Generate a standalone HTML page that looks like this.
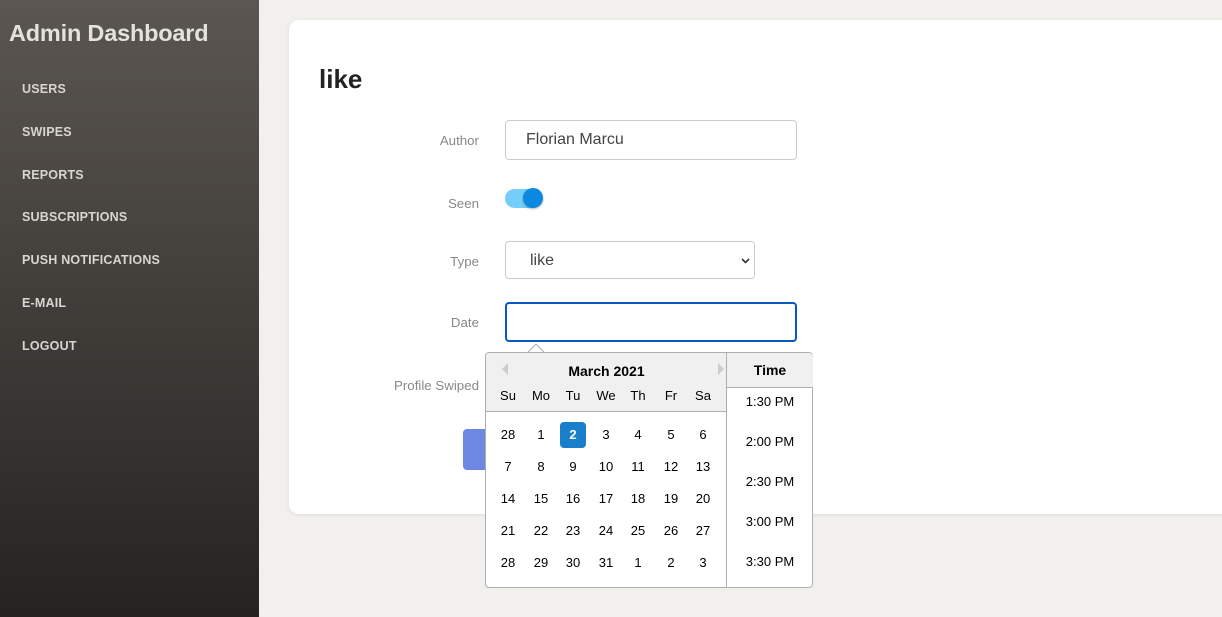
<!DOCTYPE html><html><head><style>
*{box-sizing:border-box;margin:0;padding:0}
body{width:1222px;height:617px;overflow:hidden;font-family:"Liberation Sans",sans-serif;background:#f1f0ed;position:relative}
.sb{position:absolute;left:0;top:0;width:259px;height:617px;background:linear-gradient(#5b5651,#252321)}
.sb h1{position:absolute;left:9px;top:20px;font-size:23.5px;color:#e4e2df;font-weight:bold;letter-spacing:-0.2px}
.sb a{position:absolute;left:22px;font-size:12.5px;color:#d8d5d2;letter-spacing:0.2px;font-weight:bold}
.card{position:absolute;left:289px;top:20px;width:960px;height:494px;background:#fff;border-radius:10px;box-shadow:0 1px 4px rgba(0,0,0,.08)}
.t{position:absolute;left:319px;top:64px;font-size:26px;font-weight:bold;color:#222}
.l{position:absolute;font-size:13.3px;color:#888;text-align:right;width:120px}
.in{position:absolute;border:1px solid #ccc;border-radius:4px;background:#fff;font-size:16px;color:#444}
.cal{position:absolute;left:485px;top:352px;width:328px;height:236px;border:1px solid #aeaeae;border-radius:4px;background:#fff;font-size:13px;color:#000}
.hd{position:absolute;left:0;top:0;width:241px;height:59px;background:#f0f0f0;border-bottom:1px solid #aeaeae;border-radius:4px 0 0 0}
.d{position:absolute;width:26px;height:26px;line-height:26px;text-align:center}
.tc{position:absolute;left:240px;top:0;width:87px;height:234px;border-left:1px solid #aeaeae}
.tm{position:absolute;left:0;width:86px;text-align:center}
</style></head><body>
<div class="sb"><h1>Admin Dashboard</h1>
<a style="top:82px">USERS</a><a style="top:125px">SWIPES</a><a style="top:168px">REPORTS</a><a style="top:210px">SUBSCRIPTIONS</a><a style="top:253px">PUSH NOTIFICATIONS</a><a style="top:296px">E-MAIL</a><a style="top:339px">LOGOUT</a></div>
<div class="card"></div>
<div class="t">like</div>
<div class="l" style="left:359px;top:133px">Author</div>
<div class="in" style="left:505px;top:120px;width:292px;height:40px;padding:10px 20px">Florian Marcu</div>
<div class="l" style="left:359px;top:196px">Seen</div>
<div style="position:absolute;left:505px;top:189px;width:36px;height:19px;border-radius:10px;background:#75cdfa"></div>
<div style="position:absolute;left:523px;top:188px;width:20px;height:20px;border-radius:50%;background:#0b88e0;box-shadow:0 1px 2px rgba(0,0,0,.3)"></div>
<div class="l" style="left:359px;top:254px">Type</div>
<div class="in" style="left:505px;top:241px;width:250px;height:38px;padding:10px 24px">like<svg style="position:absolute;left:235px;top:16px" width="9" height="6" viewBox="0 0 9 6"><path d="M1 1L4.5 4.5L8 1" stroke="#333" stroke-width="1.6" fill="none"/></svg></div>
<div class="l" style="left:359px;top:315px">Date</div>
<div class="in" style="left:505px;top:302px;width:292px;height:40px;border:2px solid #0a58bf"></div>
<div class="l" style="left:359px;top:378px">Profile Swiped</div>
<div style="position:absolute;left:463px;top:429px;width:30px;height:41px;background:#6c88e3;border-radius:4px"></div>
<div style="position:absolute;left:530px;top:346px;width:12px;height:12px;background:#fff;border-left:1px solid #aeaeae;border-top:1px solid #aeaeae;transform:rotate(45deg)"></div>
<div class="cal">
<div class="hd"></div>
<div style="position:absolute;left:16px;top:10px;width:0;height:0;border:6px solid transparent;border-right-color:#ccc;border-left:0"></div>
<div style="position:absolute;left:232px;top:10px;width:0;height:0;border:6px solid transparent;border-left-color:#ccc;border-right:0"></div>
<div style="position:absolute;left:0;width:241px;top:10px;text-align:center;font-weight:bold;font-size:14px">March 2021</div>
<div id="g"></div>
<div class="tc"><div style="height:35px;background:#f0f0f0;border-bottom:1px solid #aeaeae;text-align:center;line-height:35px;font-weight:bold;font-size:14px;border-radius:0 4px 0 0">Time</div>
<div class="tm" style="top:41px">1:30 PM</div><div class="tm" style="top:81px">2:00 PM</div><div class="tm" style="top:121px">2:30 PM</div><div class="tm" style="top:161px">3:00 PM</div><div class="tm" style="top:201px">3:30 PM</div></div>
</div>
<script>
var g=document.getElementById('g'),cx=[22,55,87,120,152,185,217],h=['Su','Mo','Tu','We','Th','Fr','Sa'];
var s='';h.forEach((t,i)=>s+='<div class="d" style="left:'+(cx[i]-13)+'px;top:30px">'+t+'</div>');
var days=[28,1,2,3,4,5,6,7,8,9,10,11,12,13,14,15,16,17,18,19,20,21,22,23,24,25,26,27,28,29,30,31,1,2,3],ry=[82,114,146,178,210];
days.forEach((d,k)=>{var i=k%7,r=(k/7)|0,sel=k==2;s+='<div class="d" style="left:'+(cx[i]-13)+'px;top:'+(ry[r]-13)+'px;'+(sel?'background:#1a7fcb;color:#fff;font-weight:bold;border-radius:4px;':'')+'">'+d+'</div>'});
g.innerHTML=s;
</script>
</body></html>
